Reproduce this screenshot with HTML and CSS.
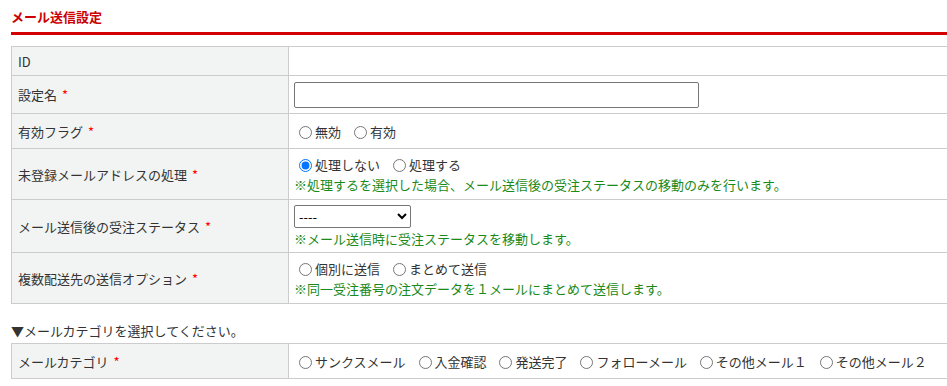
FILE: index.html
```html
<!DOCTYPE html>
<html lang="ja">
<head>
  <meta charset="UTF-8" />
  <title>メール送信設定</title>
  <link rel="stylesheet" href="styles.css">
</head>
<body>
  <div class="page">
    <h2 class="page-title">メール送信設定</h2>

    <table class="form-table">
      <tr class="row-id">
        <th>ID</th>
        <td></td>
      </tr>
      <tr class="row-name">
        <th>設定名 <span class="req">*</span></th>
        <td><input type="text" class="text-input" /></td>
      </tr>
      <tr class="row-flag">
        <th>有効フラグ <span class="req">*</span></th>
        <td>
          <label class="radio"><input type="radio" name="flag" />無効</label>
          <label class="radio"><input type="radio" name="flag" />有効</label>
        </td>
      </tr>
      <tr class="row-two">
        <th>未登録メールアドレスの処理 <span class="req">*</span></th>
        <td>
          <label class="radio"><input type="radio" name="unreg" checked />処理しない</label>
          <label class="radio"><input type="radio" name="unreg" />処理する</label>
          <div class="note">※処理するを選択した場合、メール送信後の受注ステータスの移動のみを行います。</div>
        </td>
      </tr>
      <tr class="row-select">
        <th>メール送信後の受注ステータス <span class="req">*</span></th>
        <td>
          <select class="status-select">
            <option>----</option>
          </select>
          <div class="note">※メール送信時に受注ステータスを移動します。</div>
        </td>
      </tr>
      <tr class="row-two">
        <th>複数配送先の送信オプション <span class="req">*</span></th>
        <td>
          <label class="radio"><input type="radio" name="multi" />個別に送信</label>
          <label class="radio"><input type="radio" name="multi" />まとめて送信</label>
          <div class="note">※同一受注番号の注文データを１メールにまとめて送信します。</div>
        </td>
      </tr>
    </table>

    <p class="section-label">▼メールカテゴリを選択してください。</p>

    <table class="form-table">
      <tr class="row-flag">
        <th>メールカテゴリ <span class="req">*</span></th>
        <td>
          <label class="radio"><input type="radio" name="cat" />サンクスメール</label>
          <label class="radio"><input type="radio" name="cat" />入金確認</label>
          <label class="radio"><input type="radio" name="cat" />発送完了</label>
          <label class="radio"><input type="radio" name="cat" />フォローメール</label>
          <label class="radio"><input type="radio" name="cat" />その他メール１</label>
          <label class="radio"><input type="radio" name="cat" />その他メール２</label>
        </td>
      </tr>
    </table>
  </div>
</body>
</html>
```

FILE: styles.css
```css
html, body {
  margin: 0;
  padding: 0;
  overflow: hidden;
  background: #fff;
}
body {
  font-family: "Noto Sans CJK JP", "Noto Sans", sans-serif;
  font-size: 13px;
  color: #333;
}
.page {
  width: 960px;
  padding: 8px 0 0 11px;
}
.page-title {
  margin: 0 0 11px;
  padding-bottom: 6px;
  font-size: 13px;
  line-height: 18px;
  font-weight: bold;
  color: #cc0000;
  border-bottom: 3px solid #d40000;
}
.form-table {
  width: 100%;
  border-collapse: collapse;
}
.form-table th,
.form-table td {
  border: 1px solid #cccccc;
  padding: 0 5px;
  line-height: 19px;
  vertical-align: middle;
}
.form-table th {
  width: 265px;
  background: #f2f4f3;
  text-align: left;
  font-weight: normal;
  padding-left: 6px;
}
.req {
  color: #ff0000;
  margin-left: 2px;
}
.row-id th, .row-id td { height: 28px; }
.row-name th, .row-name td { height: 37px; }
.row-flag th, .row-flag td { height: 34px; }
.row-two th, .row-two td { height: 50px; }
.row-select th, .row-select td { height: 52px; }

.text-input {
  width: 405px;
  height: 26px;
  box-sizing: border-box;
  border: 1px solid #767676;
  border-radius: 2px;
  margin: 0;
  vertical-align: middle;
}
.radio {
  margin-right: 5px;
}
.radio input {
  margin: 0 3px 0 5px;
  vertical-align: -2px;
}
.status-select {
  width: 117px;
  height: 23px;
  margin: 0;
  font-family: "Noto Sans CJK JP", sans-serif;
  font-size: 13px;
  color: #000;
  background: #fff;
  border: 1px solid #767676;
  border-radius: 2px;
}
.note {
  color: #1a8a1a;
  margin-top: 1px;
}
.section-label {
  margin: 18px 0 3px;
  line-height: 18px;
}
```
